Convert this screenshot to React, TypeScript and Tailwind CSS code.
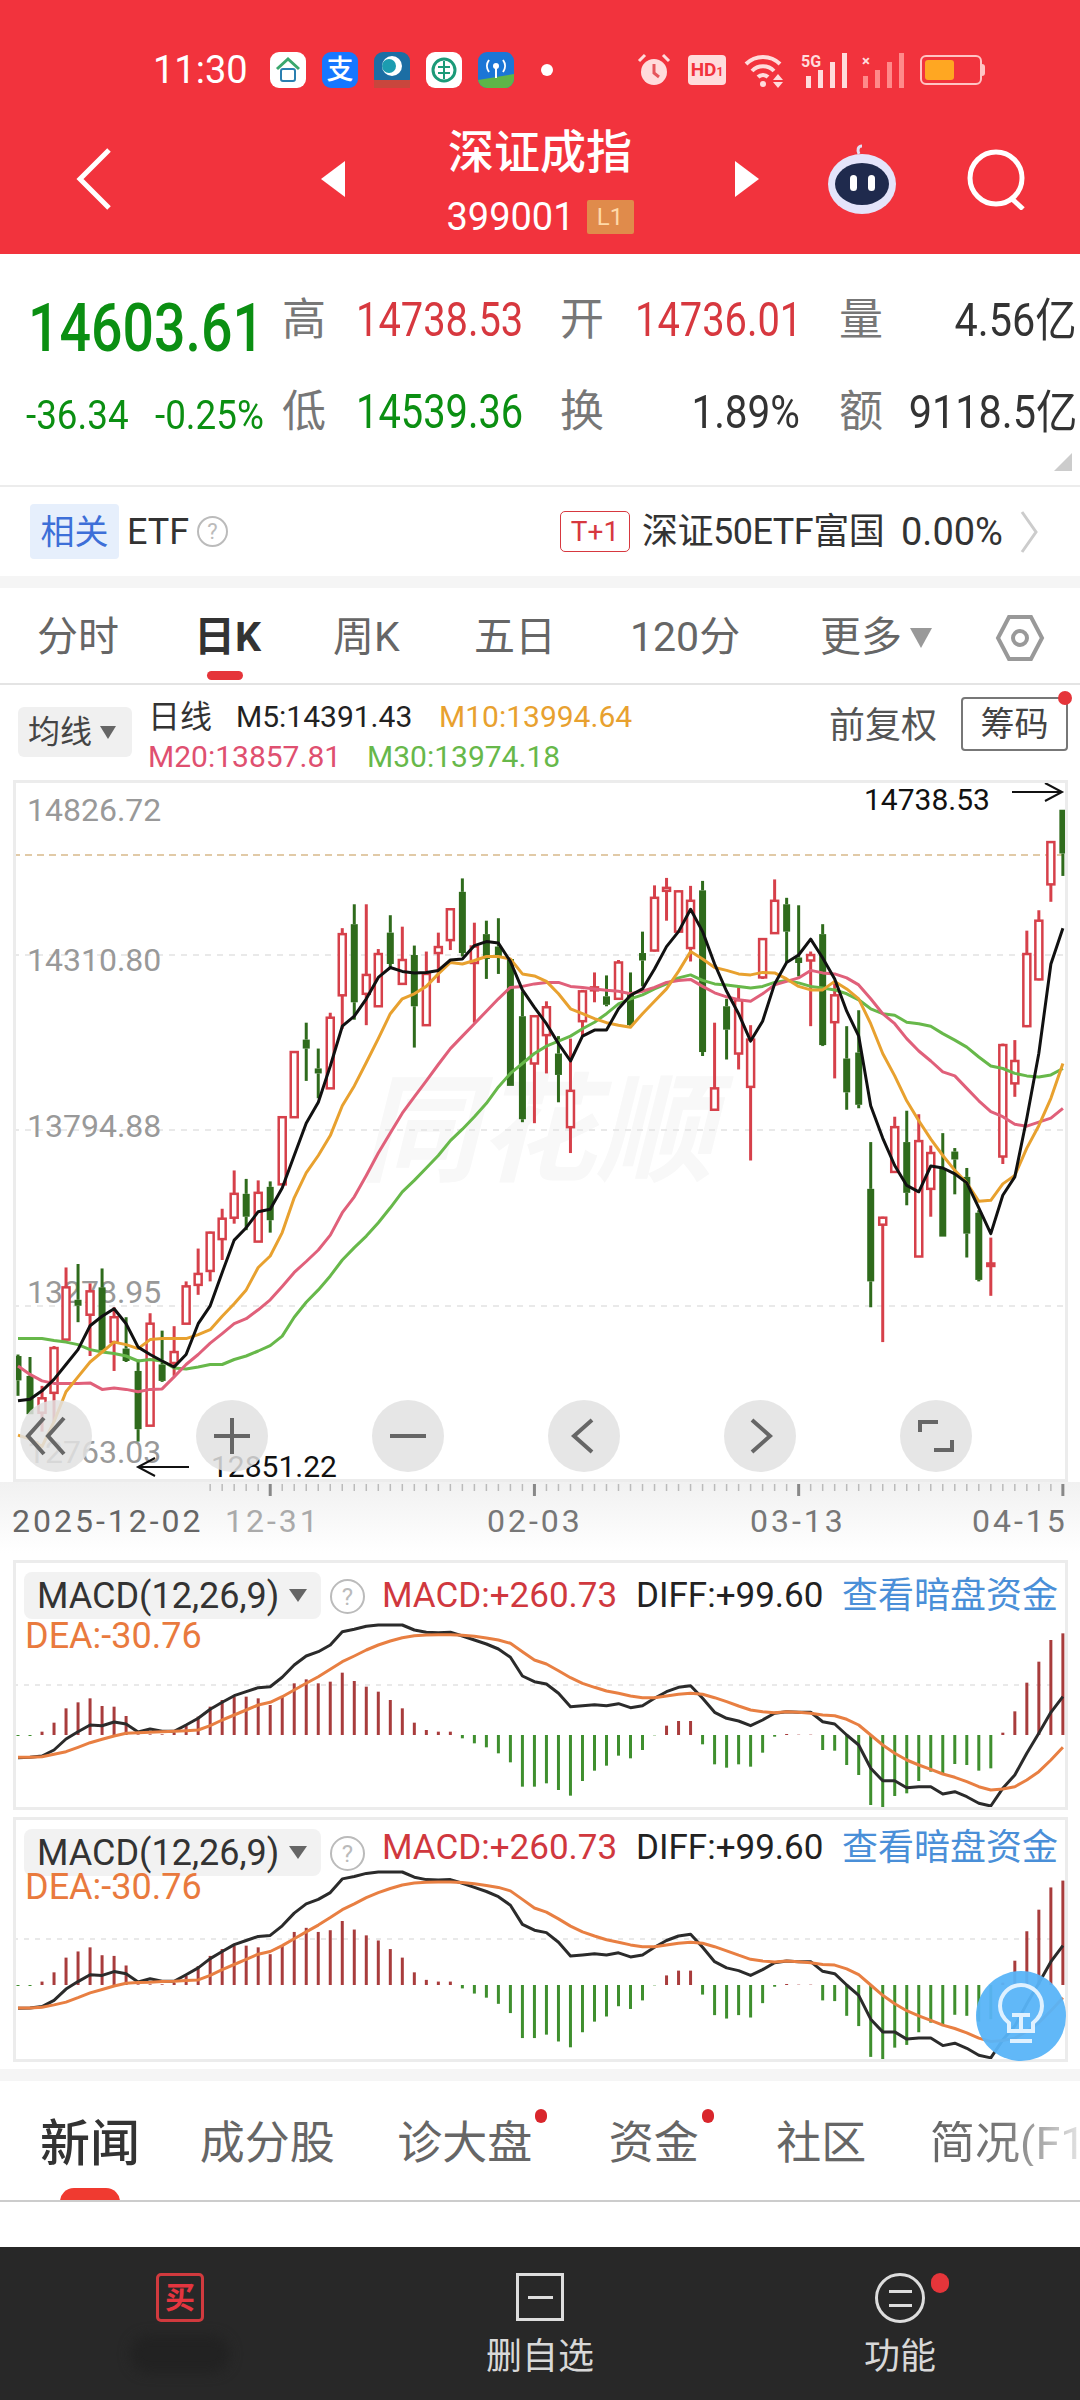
import React from 'react';

// series below are read off the reference, in zoomed-crop units
type Candle = [number, number, number, number, 'r' | 'g'];

const candles: Candle[] = [
  [1195, 1278, 1198, 1247, 'g'], [1200, 1315, 1238, 1315, 'g'], [1258, 1350, 1283, 1312, 'r'], [1178, 1330, 1182, 1272, 'r'],
  [1020, 1165, 1060, 1165, 'r'], [1013, 1130, 1085, 1097, 'g'], [1052, 1198, 1068, 1115, 'r'], [1022, 1187, 1060, 1187, 'g'],
  [1100, 1228, 1120, 1170, 'r'], [1120, 1210, 1183, 1208, 'g'], [1205, 1370, 1228, 1345, 'g'], [1112, 1338, 1133, 1338, 'r'],
  [1147, 1250, 1215, 1248, 'g'], [1138, 1238, 1190, 1212, 'r'], [1048, 1133, 1058, 1133, 'r'], [982, 1075, 1033, 1055, 'r'],
  [948, 1048, 950, 1027, 'r'], [902, 1005, 922, 963, 'r'], [825, 932, 872, 920, 'r'], [842, 945, 872, 918, 'g'],
  [845, 968, 870, 968, 'r'], [847, 950, 858, 925, 'g'], [718, 853, 718, 853, 'r'], [585, 718, 587, 718, 'r'],
  [528, 645, 562, 580, 'g'], [580, 680, 620, 630, 'g'], [508, 660, 518, 660, 'r'], [338, 540, 350, 473, 'r'],
  [290, 522, 330, 487, 'g'], [290, 533, 432, 470, 'r'], [380, 495, 390, 495, 'r'], [312, 420, 347, 410, 'g'],
  [335, 450, 402, 450, 'r'], [373, 578, 392, 495, 'g'], [385, 533, 430, 533, 'r'], [347, 448, 376, 388, 'r'],
  [298, 382, 300, 362, 'r'], [238, 395, 265, 388, 'g'], [327, 528, 375, 408, 'r'], [323, 440, 350, 400, 'g'],
  [318, 430, 375, 395, 'g'], [400, 655, 400, 655, 'g'], [465, 728, 515, 722, 'g'], [513, 730, 515, 610, 'r'],
  [485, 630, 497, 553, 'r'], [555, 688, 590, 633, 'g'], [560, 790, 665, 738, 'r'], [462, 555, 465, 525, 'r'],
  [427, 487, 457, 463, 'r'], [433, 495, 475, 492, 'g'], [402, 480, 407, 480, 'r'], [427, 535, 470, 533, 'g'],
  [345, 455, 388, 403, 'g'], [252, 385, 277, 383, 'r'], [237, 323, 257, 263, 'r'], [262, 345, 264, 345, 'r'],
  [253, 405, 283, 378, 'r'], [243, 595, 262, 587, 'g'], [528, 703, 660, 703, 'r'], [480, 602, 495, 542, 'g'],
  [457, 622, 483, 590, 'r'], [533, 805, 562, 657, 'r'], [360, 440, 360, 437, 'r'], [240, 348, 283, 348, 'r'],
  [277, 408, 290, 345, 'g'], [292, 435, 397, 408, 'g'], [385, 535, 392, 403, 'r'], [330, 575, 350, 573, 'g'],
  [445, 640, 473, 527, 'r'], [535, 703, 600, 668, 'g'], [503, 700, 588, 693, 'g'], [768, 1100, 862, 1048, 'g'],
  [918, 1170, 920, 934, 'r'], [717, 830, 738, 828, 'r'], [705, 895, 768, 870, 'g'], [712, 998, 766, 998, 'r'],
  [775, 918, 790, 862, 'r'], [750, 958, 820, 958, 'g'], [780, 873, 787, 803, 'g'], [820, 1000, 838, 952, 'g'],
  [905, 1048, 910, 1045, 'g'], [960, 1077, 1012, 1017, 'r'], [570, 812, 573, 797, 'r'], [563, 677, 605, 650, 'r'],
  [343, 537, 390, 535, 'r'], [302, 443, 323, 441, 'r'], [165, 285, 165, 250, 'r'], [100, 233, 100, 188, 'g'],
];

const ma5 = [1288, 1285, 1268, 1245, 1215, 1185, 1137, 1118, 1103, 1133, 1180, 1195, 1208, 1220, 1195, 1133, 1097, 1030, 965, 940, 908, 903, 860, 795, 730, 688, 615, 535, 515, 480, 437, 417, 425, 428, 427, 423, 402, 400, 373, 365, 368, 405, 462, 497, 530, 570, 605, 555, 543, 543, 500, 473, 460, 420, 375, 345, 300, 345, 410, 465, 510, 565, 525, 450, 407, 392, 360, 398, 440, 505, 555, 695, 760, 815, 855, 868, 816, 820, 832, 850, 900, 952, 875, 838, 720, 590, 410, 338];
const ma10 = [1357, 1365, 1380, 1330, 1270, 1240, 1210, 1190, 1170, 1175, 1183, 1165, 1163, 1163, 1163, 1155, 1145, 1118, 1093, 1065, 1020, 997, 950, 880, 830, 795, 755, 695, 655, 608, 560, 510, 480, 470, 455, 430, 407, 410, 403, 395, 395, 400, 430, 434, 445, 470, 500, 510, 520, 528, 533, 537, 510, 485, 460, 425, 385, 400, 417, 423, 430, 432, 427, 428, 440, 455, 462, 462, 445, 460, 480, 530, 590, 635, 685, 725, 762, 795, 825, 850, 887, 885, 852, 835, 780, 735, 680, 610];
const ma20 = [1218, 1235, 1248, 1253, 1253, 1253, 1252, 1265, 1262, 1265, 1270, 1265, 1264, 1240, 1215, 1195, 1172, 1153, 1133, 1123, 1105, 1085, 1058, 1030, 1008, 985, 955, 910, 878, 835, 790, 750, 710, 677, 645, 612, 580, 555, 530, 505, 480, 457, 455, 450, 447, 447, 455, 457, 460, 463, 465, 470, 465, 457, 447, 443, 441, 455, 468, 476, 482, 485, 470, 452, 445, 438, 423, 428, 430, 438, 452, 480, 510, 530, 560, 585, 605, 627, 635, 660, 685, 707, 717, 732, 736, 728, 720, 700];
const ma30 = [1163, 1163, 1163, 1167, 1170, 1175, 1185, 1190, 1193, 1198, 1208, 1205, 1208, 1222, 1224, 1220, 1215, 1215, 1205, 1198, 1188, 1177, 1158, 1120, 1090, 1065, 1037, 1005, 980, 957, 930, 900, 868, 845, 820, 795, 765, 742, 717, 690, 657, 630, 610, 590, 575, 565, 555, 540, 527, 510, 490, 480, 472, 460, 450, 438, 432, 443, 450, 452, 455, 458, 455, 447, 443, 448, 455, 458, 462, 470, 482, 500, 510, 513, 527, 530, 535, 550, 563, 577, 597, 615, 620, 630, 635, 637, 633, 620];

const hist = [-3, -3, 10, 37, 80, 98, 110, 87, 85, 57, 2, 2, 2, 6, 27, 55, 85, 105, 115, 115, 110, 90, 115, 155, 167, 155, 160, 187, 162, 145, 130, 105, 80, 37, 15, 10, 10, -10, -25, -37, -55, -82, -155, -155, -145, -165, -182, -138, -107, -92, -62, -70, -45, -1, 28, 42, 42, -28, -88, -98, -88, -95, -53, -5, 3, 1, 1, -45, -47, -90, -120, -210, -223, -183, -175, -138, -110, -120, -87, -90, -107, -100, 7, 71, 157, 220, 285, 305];
const diff = [623, 622, 618, 600, 567, 545, 525, 527, 516, 522, 546, 537, 544, 544, 525, 505, 478, 457, 437, 425, 413, 410, 382, 345, 318, 305, 285, 245, 238, 229, 225, 225, 225, 240, 247, 248, 247, 258, 270, 282, 297, 322, 378, 395, 402, 430, 470, 467, 464, 467, 461, 473, 467, 445, 425, 412, 407, 445, 487, 505, 513, 527, 510, 490, 485, 487, 487, 515, 522, 555, 585, 655, 692, 692, 713, 710, 710, 732, 725, 740, 760, 768, 715, 675, 610, 550, 487, 440];
const dea = [622, 622, 620, 613, 605, 592, 578, 568, 558, 550, 548, 547, 545, 544, 542, 540, 527, 510, 495, 480, 465, 457, 440, 420, 400, 380, 358, 335, 318, 300, 285, 273, 263, 257, 255, 254, 254, 256, 259, 264, 270, 280, 305, 330, 342, 362, 383, 400, 412, 423, 430, 438, 443, 443, 438, 433, 430, 433, 443, 455, 468, 480, 485, 488, 485, 487, 490, 495, 497, 508, 525, 555, 585, 610, 630, 645, 658, 672, 682, 695, 710, 720, 717, 710, 690, 665, 630, 592];

const cx = (i: number) => 18 + 12.01 * i;
const cy = (z: number) => 760 + z / 2.01;
const linePoints = (zs: number[], f: (z: number) => number) => zs.map((z, i) => `${cx(i).toFixed(1)},${f(z).toFixed(1)}`).join(' ');

const axisLabels: [string, number][] = [['14826.72', 810], ['14310.80', 960], ['13794.88', 1126], ['13278.95', 1292], ['12763.03', 1452]];

const StatusBar: React.FC = () => (
  <div className="flex items-center h-[36px] mt-[52px] pl-[153px]">
    <span className="w-[117px] text-[38px] leading-none text-white shrink-0">11:30</span>
    <div className="flex gap-[16px] w-[367px] shrink-0">
      <svg className="w-[36px] h-[36px] shrink-0" viewBox="0 0 36 36"><rect width="36" height="36" rx="9" fill="#fff" /><path d="M7 17 18 7l11 10" fill="none" stroke="#3aa76d" strokeWidth="3" /><rect x="11" y="17" width="14" height="12" rx="2" fill="none" stroke="#2a7fb0" strokeWidth="2" /></svg>
      <div className="w-[36px] h-[36px] shrink-0 rounded-[9px] bg-[#1677ff] flex items-center justify-center text-white text-[27px] leading-none font-medium">支</div>
      <svg className="w-[36px] h-[36px] shrink-0" viewBox="0 0 36 36"><rect width="36" height="36" rx="9" fill="#1c6ea4" /><circle cx="18" cy="14" r="10" fill="#fff" /><circle cx="15" cy="14" r="7" fill="#1c9cb0" /><rect y="28" width="36" height="8" fill="#c9463d" /></svg>
      <svg className="w-[36px] h-[36px] shrink-0" viewBox="0 0 36 36"><rect width="36" height="36" rx="9" fill="#fff" /><circle cx="18" cy="18" r="11" fill="none" stroke="#1b9a78" strokeWidth="3" /><path d="M18 9v18M12 15h12M12 21h12" stroke="#1b9a78" strokeWidth="2" /></svg>
      <svg className="w-[36px] h-[36px] shrink-0" viewBox="0 0 36 36"><rect width="36" height="36" rx="9" fill="#1b76d6" /><path d="M0 28 36 22v5a9 9 0 0 1-9 9H9a9 9 0 0 1-9-9z" fill="#5db548" /><circle cx="18" cy="14" r="3" fill="#fff" /><path d="M18 14v12M11 8a10 10 0 0 0 0 12M25 8a10 10 0 0 1 0 12" stroke="#fff" strokeWidth="2" fill="none" /></svg>
      <div className="w-[12px] h-[12px] rounded-full bg-white self-center ml-[11px] shrink-0" />
    </div>
    <div className="flex items-center">
      <svg className="w-[34px] h-[36px]" viewBox="0 0 34 36"><circle cx="17" cy="20" r="13" fill="#ffdcdc" /><path d="M17 12v9l5 4" stroke="#e5565c" strokeWidth="3" fill="none" /><path d="M2 9l6-6M32 9l-6-6" stroke="#ffdcdc" strokeWidth="3" /></svg>
      <div className="ml-[17px] w-[38px] h-[30px] rounded-[4px] bg-[#ffdcdc] text-[#f2333d] text-[19px] leading-[30px] text-center font-bold">HD<span className="text-[12px]">1</span></div>
      <svg className="ml-[18px] w-[42px] h-[36px]" viewBox="0 0 42 36"><path d="M2 12a24 24 0 0 1 34 0M8 19a15 15 0 0 1 22 0M14 25a7 7 0 0 1 10 0" stroke="#ffdcdc" strokeWidth="4" fill="none" /><circle cx="19" cy="32" r="3" fill="#ffdcdc" /><path d="M34 22l5 6h-10zM34 36l5-6h-10z" fill="#ffdcdc" /></svg>
      <svg className="ml-[15px] w-[47px] h-[36px]" viewBox="0 0 47 36"><text x="0" y="15" fontSize="16" fontWeight="700" fill="#ffdcdc" fontFamily="Roboto">5G</text><path d="M5 36V24h5v12zM17 36V18h5v18zM29 36V10h5v26zM41 36V1h5v35z" fill="#ffdcdc" /></svg>
      <svg className="ml-[14px] w-[44px] h-[36px]" viewBox="0 0 44 36"><text x="0" y="14" fontSize="15" fontWeight="700" fill="#ffdcdc" fontFamily="Roboto">×</text><path d="M1 36V24h5v12zM13 36V18h5v18zM25 36V10h5v26zM37 36V1h5v35z" fill="#ff8a8a" /></svg>
      <div className="ml-[14px] flex items-center">
        <div className="w-[62px] h-[30px] rounded-[6px] border-2 border-[#ffc4c4] p-[3px]"><div className="w-[29px] h-full rounded-[3px] bg-[#ffa722]" /></div>
        <div className="w-[3px] h-[12px] bg-[#ffc4c4] rounded-r" />
      </div>
    </div>
  </div>
);

const NavBar: React.FC = () => (
  <div className="flex items-center h-[128px] mt-[27px]">
    <svg className="ml-[76px] w-[36px] h-[64px]" viewBox="0 0 36 64"><path d="M33 3 4 32l29 29" fill="none" stroke="#fff" strokeWidth="5" /></svg>
    <div className="ml-[209px] w-0 h-0 border-y-[18px] border-y-transparent border-r-[24px] border-r-white" />
    <div className="w-[390px] flex flex-col items-center">
      <div className="text-[46px] leading-[60px] text-white font-medium">深证成指</div>
      <div className="flex items-center mt-[15px] h-[40px]">
        <span className="text-[38px] leading-none text-white">399001</span>
        <span className="ml-[12px] w-[47px] h-[34px] bg-[#e08b4b] rounded-[2px] text-[#ffd9a8] text-[24px] leading-[34px] text-center">L1</span>
      </div>
    </div>
    <div className="w-0 h-0 border-y-[18px] border-y-transparent border-l-[24px] border-l-white" />
    <svg className="ml-[67px] w-[72px] h-[70px]" viewBox="0 0 72 70">
      <path d="M33 10c-2-4-1-8 3-8" fill="none" stroke="#dfe0f5" strokeWidth="3" />
      <ellipse cx="36" cy="40" rx="34" ry="30" fill="#e4e4fa" />
      <ellipse cx="36" cy="40" rx="27" ry="21" fill="#1f2a4d" />
      <rect x="24" y="31" width="7" height="16" rx="3.5" fill="#fff" />
      <rect x="42" y="31" width="7" height="16" rx="3.5" fill="#fff" />
    </svg>
    <svg className="ml-[69px] w-[59px] h-[62px]" viewBox="0 0 59 62"><circle cx="29" cy="30" r="26" fill="none" stroke="#fff" strokeWidth="5" /><path d="M44 50l12 11" stroke="#fff" strokeWidth="5" /></svg>
  </div>
);

const Label: React.FC<{ children: React.ReactNode }> = ({ children }) => <span className="text-[44px] leading-none text-[#777]">{children}</span>;

const Quote: React.FC = () => (
  <div className="relative h-[231px] grid grid-cols-[282px_74px_204px_75px_204px_60px_178px] grid-rows-[92px_92px] pt-[20px] items-center text-[#333]">
    <span className="pl-[28px] pt-[18px] text-[66px] leading-none font-medium text-[#0b8f12] whitespace-nowrap inline-block scale-x-[.84] origin-[28px_50%]">14603.61</span>
    <Label>高</Label>
    <span className="text-[48px] leading-none text-[#d7383f] inline-block scale-x-[.83] origin-left">14738.53</span>
    <Label>开</Label>
    <span className="text-[48px] leading-none text-[#d7383f] inline-block scale-x-[.83] origin-left">14736.01</span>
    <Label>量</Label>
    <span className="justify-self-end text-[46px] leading-none inline-block scale-x-[.9] origin-right whitespace-nowrap">4.56亿</span>
    <div className="pl-[26px] flex gap-[27px] text-[40px] leading-none text-[#0b8f12] pt-[8px] whitespace-nowrap">
      <span className="w-[102px] inline-block scale-x-[.92] origin-left">-36.34</span>
      <span className="inline-block scale-x-[.92] origin-left">-0.25%</span>
    </div>
    <Label>低</Label>
    <span className="text-[48px] leading-none text-[#0b8f12] inline-block scale-x-[.83] origin-left">14539.36</span>
    <Label>换</Label>
    <span className="pr-[39px] text-right text-[46px] leading-none inline-block scale-x-[.88] origin-[165px_50%]">1.89%</span>
    <Label>额</Label>
    <span className="justify-self-end text-[46px] leading-none whitespace-nowrap inline-block scale-x-[.9] origin-right">9118.5亿</span>
    <div className="absolute right-[8px] bottom-[14px] w-0 h-0 border-b-[18px] border-b-[#ccc] border-l-[18px] border-l-transparent" />
  </div>
);

const EtfRow: React.FC = () => (
  <div className="h-[91px] border-t-2 border-[#ececec] flex items-center text-[36px] leading-none text-[#333]">
    <div className="ml-[30px] w-[89px] h-[55px] rounded-[4px] bg-[#e6effc] text-[#3d6fd8] text-[34px] flex items-center justify-center">相关</div>
    <span className="ml-[8px] w-[70px]">ETF</span>
    <div className="w-[31px] h-[31px] rounded-full border-2 border-[#bbb] text-[#bbb] text-[22px] flex items-center justify-center">?</div>
    <div className="ml-[332px] w-[70px] h-[41px] rounded-[5px] border border-[#d7383f] text-[#d7383f] text-[28px] flex items-center justify-center">T+1</div>
    <span className="ml-[12px] w-[259px] whitespace-nowrap tracking-[-0.5px]">深证50ETF富国</span>
    <span className="w-[119px] text-[38px]">0.00%</span>
    <svg className="w-[18px] h-[44px]" viewBox="0 0 18 44"><path d="M2 2l14 20L2 42" fill="none" stroke="#ccc" strokeWidth="3" /></svg>
  </div>
);

const PeriodTabs: React.FC = () => (
  <div className="h-[97px] border-b-2 border-[#e4e4e4] flex items-center pl-[37px] pt-[4px] text-[41px] leading-none text-[#666]">
    <span className="w-[157px]">分时</span>
    <span className="relative w-[139px] text-[#333] font-bold">日K
      <span className="absolute left-[13px] top-[54px] w-[36px] h-[9px] rounded-full bg-[#e5353a]" />
    </span>
    <span className="w-[141px]">周K</span>
    <span className="w-[156px]">五日</span>
    <span className="w-[190px]">120分</span>
    <span className="w-[90px]">更多</span>
    <div className="w-0 h-0 border-x-[11px] border-x-transparent border-t-[20px] border-t-[#999]" />
    <svg className="ml-[63px] w-[50px] h-[48px]" viewBox="0 0 50 48"><path d="M14 3h22l11 21-11 21H14L3 24z" fill="none" stroke="#999" strokeWidth="4" /><circle cx="25" cy="24" r="7" fill="none" stroke="#999" strokeWidth="4" /></svg>
  </div>
);

const MaRow: React.FC = () => (
  <div className="h-[95px] flex pl-[18px] text-[30px] leading-none">
    <div className="mt-[22px] w-[114px] h-[50px] rounded-[6px] bg-[#f0f0f0] flex items-center pl-[10px] text-[#444] text-[32px] shrink-0">
      均线
      <div className="ml-[8px] w-0 h-0 border-x-[8px] border-x-transparent border-t-[13px] border-t-[#666]" />
    </div>
    <div className="ml-[16px] w-[650px] pt-[12px]">
      <div className="flex h-[40px] items-center">
        <span className="w-[88px] text-[#333] text-[32px]">日线</span>
        <span className="w-[203px] text-[#222]">M5:14391.43</span>
        <span className="text-[#e8a12f]">M10:13994.64</span>
      </div>
      <div className="flex h-[40px] items-center">
        <span className="w-[219px] text-[#df5070]">M20:13857.81</span>
        <span className="text-[#67b84a]">M30:13974.18</span>
      </div>
    </div>
    <span className="ml-[31px] mt-[23px] w-[132px] text-[36px] text-[#555] whitespace-nowrap">前复权</span>
    <div className="relative mt-[12px] w-[107px] h-[54px] rounded-[4px] border-2 border-[#777] flex items-center justify-center text-[34px] text-[#444]">
      筹码
      <div className="absolute -right-[6px] -top-[8px] w-[14px] h-[14px] rounded-full bg-[#e5353a]" />
    </div>
  </div>
);

const KChart: React.FC = () => (
  <div className="relative ml-[13px] w-[1055px] h-[702px]">
    <svg className="block w-[1055px] h-[702px]" viewBox="13 780 1055 702">
      <text x="360" y="1172" fontSize="118" fontWeight="700" fontStyle="italic" fill="#f8f8f8" fontFamily="Noto Sans CJK SC">同花顺</text>
      <line x1="13" x2="1068" y1="855" y2="855" stroke="#d8b98a" strokeWidth="1.5" strokeDasharray="7 5" />
      {[955, 1130, 1306].map(y => <line key={y} x1="13" x2="1068" y1={y} y2={y} stroke="#e2e2e2" strokeWidth="1.5" strokeDasharray="6 6" />)}
      {axisLabels.map(([t, y]) => <text key={t} x="27" y={y + 11} fontSize="32" fill="#999" fontFamily="Roboto">{t}</text>)}
      {candles.map(([hi, lo, top, bot, side], i) => {
        const x = cx(i);
        const color = side === 'r' ? '#d6404a' : '#2f6b1c';
        return (
          <g key={i}>
            <line x1={x} x2={x} y1={cy(hi)} y2={cy(top)} stroke={color} strokeWidth="3" />
            <line x1={x} x2={x} y1={cy(bot)} y2={cy(lo)} stroke={color} strokeWidth="3" />
            {side === 'r'
              ? <rect x={x - 3.5} y={cy(top)} width="7" height={Math.max(cy(bot) - cy(top), 1)} fill="#fff" stroke={color} strokeWidth="2.5" />
              : <rect x={x - 3.5} y={cy(top)} width="7" height={Math.max(cy(bot) - cy(top), 3)} fill={color} />}
          </g>
        );
      })}
      <polyline points={linePoints(ma30, cy)} fill="none" stroke="#67b84a" strokeWidth="3" strokeLinejoin="round" />
      <polyline points={linePoints(ma20, cy)} fill="none" stroke="#e0607a" strokeWidth="3" strokeLinejoin="round" />
      <polyline points={linePoints(ma10, cy)} fill="none" stroke="#e8a12f" strokeWidth="3" strokeLinejoin="round" />
      <polyline points={linePoints(ma5, cy)} fill="none" stroke="#111" strokeWidth="3" strokeLinejoin="round" />
      <text x="864" y="810" fontSize="30" fill="#111" fontFamily="Roboto">14738.53</text>
      <path d="M1012 792h49M1045 783l17 9-17 9" fill="none" stroke="#111" strokeWidth="2" />
      <text x="211" y="1477" fontSize="30" fill="#111" fontFamily="Roboto">12851.22</text>
      <path d="M189 1467h-50M155 1458l-17 9 17 9" fill="none" stroke="#111" strokeWidth="2" />
    </svg>
    <div className="absolute inset-0 border-[3px] border-[#ececec]" />
    <div className="absolute left-[7px] top-[620px] flex gap-[104px]">
      {[
        <path key="a" d="M24 18 8 36l16 18M44 18 28 36l16 18" />,
        <path key="b" d="M18 36h36M36 18v36" />,
        <path key="c" d="M18 36h36" />,
        <path key="d" d="M44 20 26 36l18 16" />,
        <path key="e" d="M28 20l18 16-18 16" />,
        <path key="f" d="M20 32V22h18M52 40v10H34" />,
      ].map((icon, i) => (
        <div key={i} className="w-[72px] h-[72px] rounded-full bg-[#e2e2e2]/85">
          <svg className="w-[72px] h-[72px]" viewBox="0 0 72 72" fill="none" stroke="#666" strokeWidth="4">{icon}</svg>
        </div>
      ))}
    </div>
  </div>
);

const DateStrip: React.FC = () => (
  <div className="h-[71px] bg-gradient-to-b from-[#f1f1f1] to-white">
    <svg className="block w-[1080px] h-[14px]" viewBox="0 0 1080 14">
      {candles.map((_, i) => {
        const major = i === 21 || i === 43 || i === 65 || i === 87;
        return i >= 16 ? <line key={i} x1={cx(i)} x2={cx(i)} y1="2" y2={major ? 14 : 9} stroke={major ? '#888' : '#bbb'} strokeWidth={major ? 3 : 1.5} /> : null;
      })}
    </svg>
    <div className="flex pl-[12px] pt-[9px] text-[32px] leading-none tracking-[3px] text-[#777] whitespace-nowrap">
      <span className="w-[213px] text-[#666]">2025-12-02</span>
      <span className="w-[262px] text-[#aaa]">12-31</span>
      <span className="w-[263px]">02-03</span>
      <span className="w-[222px]">03-13</span>
      <span>04-15</span>
    </div>
  </div>
);

interface MacdPanelProps {
  top: number;
  height: number;
  zero: number;
  mid: number;
  scale: number;
  headTextClass: string;
  deaClass: string;
  children?: React.ReactNode;
}

const MacdPanel: React.FC<MacdPanelProps> = ({ top, height, zero, mid, scale, headTextClass, deaClass, children }) => {
  const y = (z: number) => zero + ((z - 555) * scale) / 3;
  return (
    <div className="relative ml-[13px] w-[1055px]" style={{ height }}>
      <svg className="block w-[1055px]" style={{ height }} viewBox={`13 ${top} 1055 ${height}`}>
        <line x1="13" x2="1055" y1={mid} y2={mid} stroke="#e2e2e2" strokeWidth="1.5" strokeDasharray="5 6" />
        {hist.map((v, i) => (
          <line key={i} x1={cx(i)} x2={cx(i)} y1={zero} y2={zero - (v * scale) / 3} stroke={v >= 0 ? '#a83c3c' : '#3f8f2e'} strokeWidth="3" />
        ))}
        <polyline points={linePoints(diff, y)} fill="none" stroke="#2b2b2b" strokeWidth="3" strokeLinejoin="round" />
        <polyline points={linePoints(dea, y)} fill="none" stroke="#e87f42" strokeWidth="3" strokeLinejoin="round" />
      </svg>
      <div className="absolute inset-0 border-[3px] border-[#ececec]" />
      <div className="absolute left-[11px] top-[12px] right-[13px] flex items-start text-[35px] leading-none whitespace-nowrap">
        <div className="w-[297px] h-[47px] rounded-[8px] bg-[#f2f2f2] flex items-center pl-[13px] text-[36px] text-[#333] shrink-0">
          <span className="w-[252px]">MACD(12,26,9)</span>
          <div className="w-0 h-0 border-x-[9px] border-x-transparent border-t-[13px] border-t-[#666]" />
        </div>
        <div className="ml-[9px] mt-[7px] w-[35px] h-[35px] rounded-full border-2 border-[#bbb] text-[#bbb] text-[24px] flex items-center justify-center shrink-0">?</div>
        <div className={`flex ml-[17px] ${headTextClass}`}>
          <span className="w-[254px] text-[#d0383e]">MACD:+260.73</span>
          <span className="w-[206px] text-[#222]">DIFF:+99.60</span>
          <span className="text-[#4a8fd8] text-[36px]">查看暗盘资金</span>
        </div>
      </div>
      <span className={`absolute left-[12px] text-[36px] leading-none text-[#e97a3e] whitespace-nowrap ${deaClass}`}>DEA:-30.76</span>
      {children}
    </div>
  );
};

const NewsTabs: React.FC = () => {
  const dot = "absolute -right-[15px] -top-[8px] w-[12px] h-[14px] rounded-full bg-[#d9262c]";
  return (
    <div className="h-[121px] border-b-2 border-[#ccc] flex items-center pl-[40px] pt-[6px] text-[45px] leading-none text-[#666] overflow-hidden whitespace-nowrap">
      <span className="relative w-[160px] text-[50px] text-[#333] font-medium">新闻
        <span className="absolute left-[20px] top-[69px] w-[60px] h-[14px] rounded-t-full rounded-b-[6px] bg-[#f03a30]" />
      </span>
      <span className="w-[198px]">成分股</span>
      <span className="relative w-[212px]"><span className="relative">诊大盘<span className={dot} /></span></span>
      <span className="relative w-[168px]"><span className="relative">资金<span className={dot} /></span></span>
      <span className="w-[154px]">社区</span>
      <span className="text-transparent bg-clip-text bg-gradient-to-r from-[#666] via-[#777] to-[#e4e4e4] w-[150px] shrink-0">简况(F1</span>
    </div>
  );
};

const BottomBar: React.FC = () => (
  <div className="h-[153px] bg-[#282828] flex pt-[26px] text-[36px] leading-none text-[#d8d8d8]">
    <div className="ml-[125px] w-[110px] flex flex-col items-center">
      <div className="w-[48px] h-[49px] rounded-[5px] border-[3px] border-[#d13a3e] flex items-center justify-center text-[30px] font-bold text-[#e5353f]">买</div>
      <div className="mt-[13px] w-[100px] h-[38px] rounded-full bg-[#222] blur-[6px]" />
    </div>
    <div className="ml-[252px] w-[106px] flex flex-col items-center">
      <div className="w-[48px] h-[48px] border-[3px] border-[#ddd] flex items-center justify-center"><div className="w-[25px] h-[3px] bg-[#ddd]" /></div>
      <span className="mt-[18px] whitespace-nowrap">删自选</span>
    </div>
    <div className="ml-[272px] w-[70px] flex flex-col items-center">
      <div className="relative w-[50px] h-[50px] rounded-full border-[3px] border-[#ddd] flex flex-col items-center justify-center gap-[11px]">
        <div className="w-[23px] h-[3px] bg-[#ddd]" />
        <div className="w-[23px] h-[3px] bg-[#ddd]" />
        <div className="absolute -right-[27px] -top-[3px] w-[18px] h-[20px] rounded-full bg-[#e5353a]" />
      </div>
      <span className="mt-[16px] whitespace-nowrap">功能</span>
    </div>
  </div>
);

export default function App() {
  return (
    <div className="w-[1080px] h-[2400px] overflow-hidden bg-white font-['Roboto','Noto_Sans_CJK_SC',sans-serif]">
      <header className="h-[254px] bg-[#f2333d] overflow-hidden">
        <StatusBar />
        <NavBar />
      </header>
      <Quote />
      <EtfRow />
      <div className="h-[12px] bg-[#f5f5f5]" />
      <PeriodTabs />
      <MaRow />
      <KChart />
      <DateStrip />
      <div className="h-[7px]" />
      <MacdPanel top={1560} height={250} zero={1735} mid={1685} scale={1} headTextClass="mt-[6px]" deaClass="top-[58px]" />
      <div className="h-[7px]" />
      <MacdPanel top={1817} height={245} zero={1985} mid={1939} scale={1.027} headTextClass="mt-[1px]" deaClass="top-[52px]">
        <div className="absolute right-[2px] bottom-[1px] w-[90px] h-[90px] rounded-full bg-[#58b4f8]/95">
          <svg className="w-[90px] h-[90px]" viewBox="0 0 90 90" fill="none" stroke="#dff1ff" strokeWidth="4">
            <path d="M33 60v-8c-5-4-9-9-9-17a21 21 0 0 1 42 0c0 8-4 13-9 17v8z" />
            <path d="M36 44h18M45 44v16M34 70h22" />
          </svg>
        </div>
      </MacdPanel>
      <div className="h-[7px]" />
      <div className="h-[12px] bg-[#f5f5f5]" />
      <NewsTabs />
      <div className="h-[45px]" />
      <BottomBar />
    </div>
  );
}
